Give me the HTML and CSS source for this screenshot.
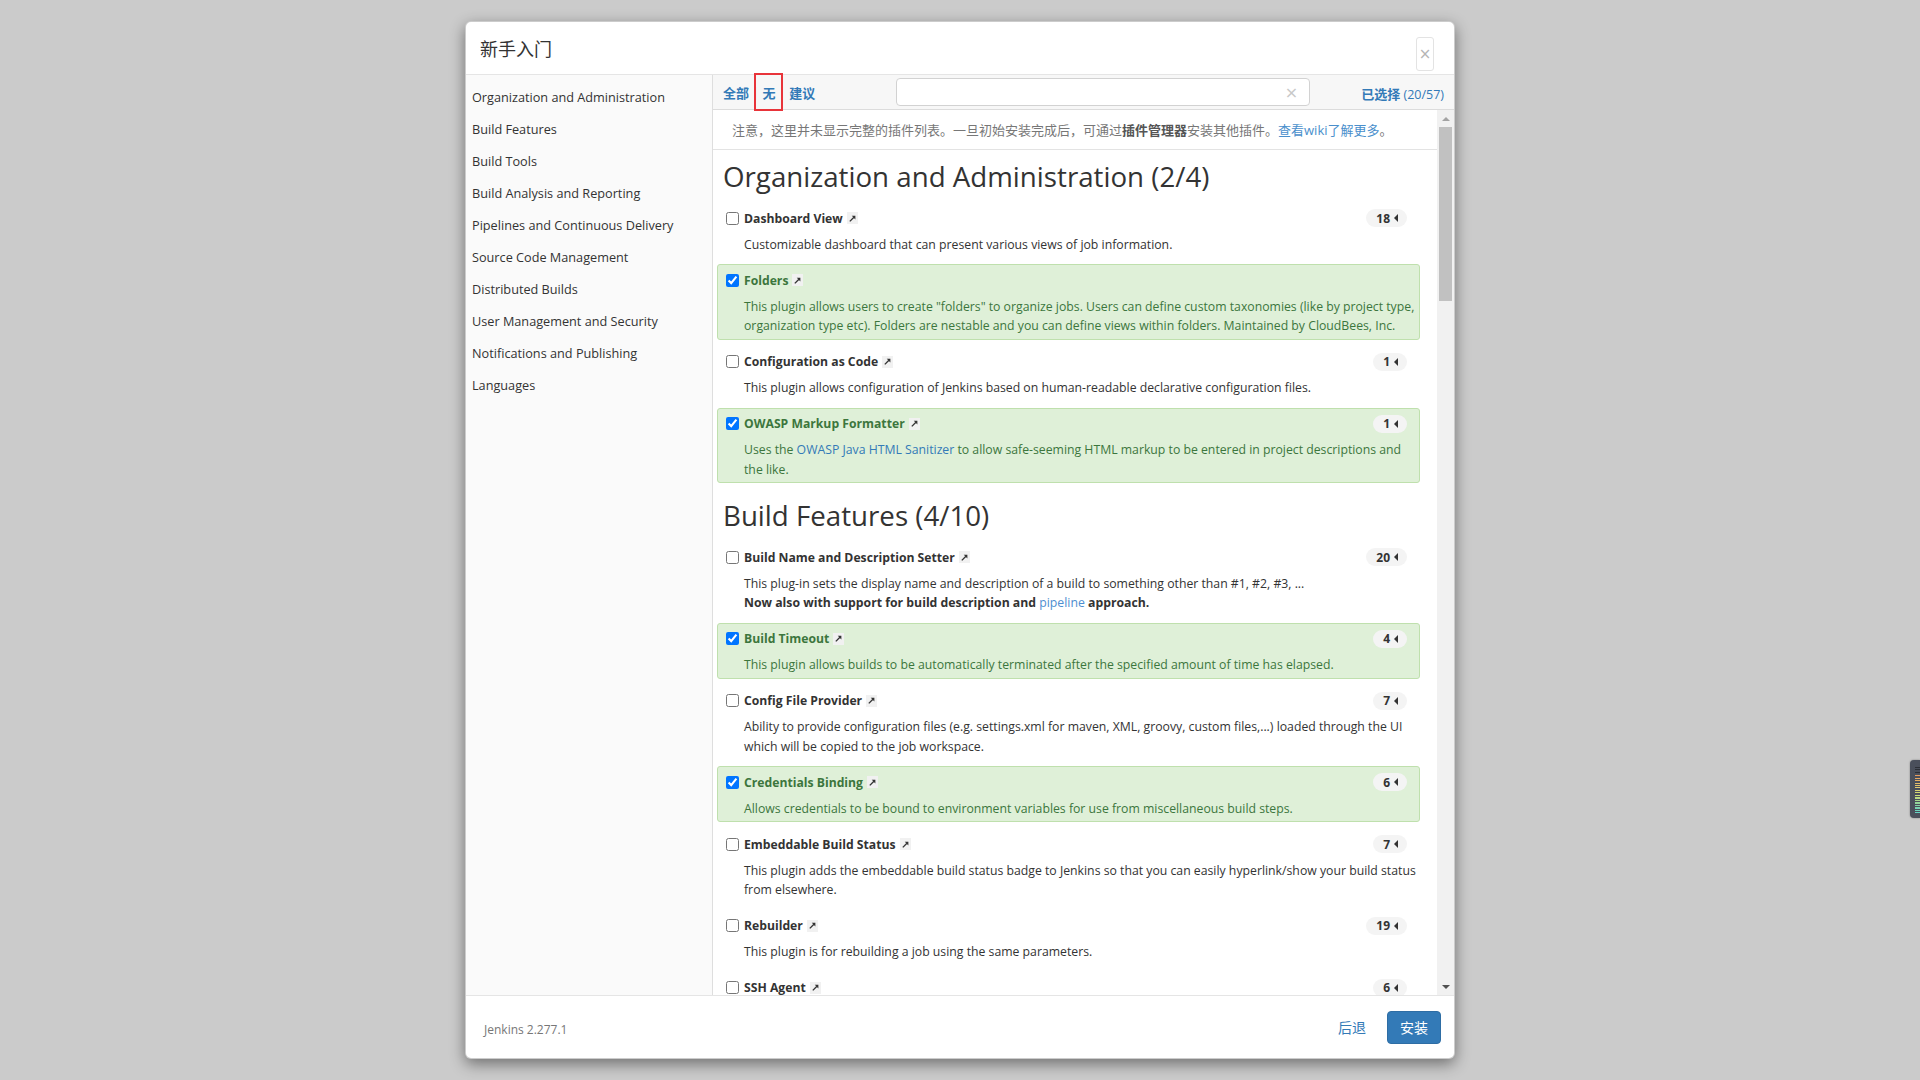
FILE: index.html
```html
<!DOCTYPE html>
<html lang="zh-CN">
<head>
<meta charset="utf-8">
<title>新手入门</title>
<link rel="stylesheet" href="styles.css">
</head>
<body>
<div class="dialog">
  <div class="header">
    <h1 class="title">新手入门</h1>
    <button class="close">×</button>
  </div>
  <div class="body">
    <nav class="sidebar">
      <a>Organization and Administration</a>
      <a>Build Features</a>
      <a>Build Tools</a>
      <a>Build Analysis and Reporting</a>
      <a>Pipelines and Continuous Delivery</a>
      <a>Source Code Management</a>
      <a>Distributed Builds</a>
      <a>User Management and Security</a>
      <a>Notifications and Publishing</a>
      <a>Languages</a>
    </nav>
    <div class="content">
      <div class="toolbar">
        <div class="filters"><a>全部</a><span class="sep">|</span><a class="marked">无</a><span class="sep">|</span><a>建议</a></div>
        <div class="search"><input type="text"><span class="clear">×</span></div>
        <div class="count"><b>已选择</b> (20/57)</div>
      </div>
      <div class="scroll">
        <div class="list">
          <div class="notice">注意，这里并未显示完整的插件列表。一旦初始安装完成后，可通过<b>插件管理器</b>安装其他插件。<a>查看wiki了解更多</a>。</div>
          <div class="plugins">
            <h2>Organization and Administration (2/4)</h2>

            <div class="plugin">
              <div class="ptitle"><input type="checkbox"><span>Dashboard View</span><span class="ext"><svg viewBox="0 0 10 10"><path d="M2 8.2 6.6 3.6" stroke="#333" stroke-width="1.5"/><path d="M4.2 2H8.2V6Z" fill="#333"/></svg></span></div>
              <span class="badge">18<i class="tri"></i></span>
              <div class="desc">Customizable dashboard that can present various views of job information.</div>
            </div>

            <div class="plugin sel">
              <div class="ptitle"><input type="checkbox" checked><span>Folders</span><span class="ext"><svg viewBox="0 0 10 10"><path d="M2 8.2 6.6 3.6" stroke="#333" stroke-width="1.5"/><path d="M4.2 2H8.2V6Z" fill="#333"/></svg></span></div>
              <div class="desc">This plugin allows users to create "folders" to organize jobs. Users can define custom taxonomies (like by project type, organization type etc). Folders are nestable and you can define views within folders. Maintained by CloudBees, Inc.</div>
            </div>

            <div class="plugin">
              <div class="ptitle"><input type="checkbox"><span>Configuration as Code</span><span class="ext"><svg viewBox="0 0 10 10"><path d="M2 8.2 6.6 3.6" stroke="#333" stroke-width="1.5"/><path d="M4.2 2H8.2V6Z" fill="#333"/></svg></span></div>
              <span class="badge">1<i class="tri"></i></span>
              <div class="desc">This plugin allows configuration of Jenkins based on human-readable declarative configuration files.</div>
            </div>

            <div class="plugin sel">
              <div class="ptitle"><input type="checkbox" checked><span>OWASP Markup Formatter</span><span class="ext"><svg viewBox="0 0 10 10"><path d="M2 8.2 6.6 3.6" stroke="#333" stroke-width="1.5"/><path d="M4.2 2H8.2V6Z" fill="#333"/></svg></span></div>
              <span class="badge">1<i class="tri"></i></span>
              <div class="desc">Uses the <a class="link">OWASP Java HTML Sanitizer</a> to allow safe-seeming HTML markup to be entered in project descriptions and the like.</div>
            </div>

            <h2>Build Features (4/10)</h2>

            <div class="plugin">
              <div class="ptitle"><input type="checkbox"><span>Build Name and Description Setter</span><span class="ext"><svg viewBox="0 0 10 10"><path d="M2 8.2 6.6 3.6" stroke="#333" stroke-width="1.5"/><path d="M4.2 2H8.2V6Z" fill="#333"/></svg></span></div>
              <span class="badge">20<i class="tri"></i></span>
              <div class="desc">This plug-in sets the display name and description of a build to something other than #1, #2, #3, ...<br><b>Now also with support for build description and <a class="link light">pipeline</a> approach.</b></div>
            </div>

            <div class="plugin sel">
              <div class="ptitle"><input type="checkbox" checked><span>Build Timeout</span><span class="ext"><svg viewBox="0 0 10 10"><path d="M2 8.2 6.6 3.6" stroke="#333" stroke-width="1.5"/><path d="M4.2 2H8.2V6Z" fill="#333"/></svg></span></div>
              <span class="badge">4<i class="tri"></i></span>
              <div class="desc">This plugin allows builds to be automatically terminated after the specified amount of time has elapsed.</div>
            </div>

            <div class="plugin">
              <div class="ptitle"><input type="checkbox"><span>Config File Provider</span><span class="ext"><svg viewBox="0 0 10 10"><path d="M2 8.2 6.6 3.6" stroke="#333" stroke-width="1.5"/><path d="M4.2 2H8.2V6Z" fill="#333"/></svg></span></div>
              <span class="badge">7<i class="tri"></i></span>
              <div class="desc">Ability to provide configuration files (e.g. settings.xml for maven, XML, groovy, custom files,...) loaded through the UI which will be copied to the job workspace.</div>
            </div>

            <div class="plugin sel">
              <div class="ptitle"><input type="checkbox" checked><span>Credentials Binding</span><span class="ext"><svg viewBox="0 0 10 10"><path d="M2 8.2 6.6 3.6" stroke="#333" stroke-width="1.5"/><path d="M4.2 2H8.2V6Z" fill="#333"/></svg></span></div>
              <span class="badge">6<i class="tri"></i></span>
              <div class="desc">Allows credentials to be bound to environment variables for use from miscellaneous build steps.</div>
            </div>

            <div class="plugin">
              <div class="ptitle"><input type="checkbox"><span>Embeddable Build Status</span><span class="ext"><svg viewBox="0 0 10 10"><path d="M2 8.2 6.6 3.6" stroke="#333" stroke-width="1.5"/><path d="M4.2 2H8.2V6Z" fill="#333"/></svg></span></div>
              <span class="badge">7<i class="tri"></i></span>
              <div class="desc">This plugin adds the embeddable build status badge to Jenkins so that you can easily hyperlink/show your build status from elsewhere.</div>
            </div>

            <div class="plugin">
              <div class="ptitle"><input type="checkbox"><span>Rebuilder</span><span class="ext"><svg viewBox="0 0 10 10"><path d="M2 8.2 6.6 3.6" stroke="#333" stroke-width="1.5"/><path d="M4.2 2H8.2V6Z" fill="#333"/></svg></span></div>
              <span class="badge">19<i class="tri"></i></span>
              <div class="desc">This plugin is for rebuilding a job using the same parameters.</div>
            </div>

            <div class="plugin">
              <div class="ptitle"><input type="checkbox"><span>SSH Agent</span><span class="ext"><svg viewBox="0 0 10 10"><path d="M2 8.2 6.6 3.6" stroke="#333" stroke-width="1.5"/><path d="M4.2 2H8.2V6Z" fill="#333"/></svg></span></div>
              <span class="badge">6<i class="tri"></i></span>
              <div class="desc">This plugin allows you to provide SSH credentials to builds via a ssh-agent in Jenkins.</div>
            </div>
          </div>
        </div>
        <div class="vscroll">
          <div class="arrow up"></div>
          <div class="thumb"></div>
          <div class="track"></div>
          <div class="arrow down"></div>
        </div>
      </div>
    </div>
  </div>
  <div class="footer">
    <span class="version">Jenkins 2.277.1</span>
    <a class="back">后退</a>
    <button class="install">安装</button>
  </div>
</div>
<div class="widget"><div class="bars-dark"></div><div class="bars"></div></div>
</body>
</html>
```
FILE: styles.css
```css
html, body {
  margin: 0;
  height: 1080px;
  overflow: hidden;
}
body {
  background: #cbcbcb;
  font-family: "Open Sans", "Noto Sans CJK SC", sans-serif;
  color: #333;
}
a { cursor: pointer; text-decoration: none; }

.dialog {
  width: 990px;
  height: 1038px;
  margin: 21px auto 0;
  background: #fff;
  border: 1px solid rgba(0, 0, 0, 0.2);
  border-radius: 6px;
  box-shadow: 0 5px 15px rgba(0, 0, 0, 0.45);
  box-sizing: border-box;
  display: flex;
  flex-direction: column;
  overflow: hidden;
}

.header {
  height: 53px;
  box-sizing: border-box;
  border-bottom: 1px solid #e5e5e5;
  display: flex;
  align-items: center;
  padding: 0 20px 0 14px;
  flex: none;
}
.title {
  margin: 0;
  font-family: "Noto Sans CJK SC", sans-serif;
  font-size: 18px;
  font-weight: normal;
  color: #333;
}
.close {
  margin: 12px 0 0 auto;
  width: 18px;
  height: 34px;
  padding: 0;
  border: 1px solid #e3e3e3;
  border-radius: 3px;
  background: #fff;
  color: #b5b5b5;
  font-family: "DejaVu Sans", sans-serif;
  font-size: 15px;
  line-height: 1;
}

.body {
  flex: 1;
  display: flex;
  min-height: 0;
}

.sidebar {
  width: 247px;
  flex: none;
  box-sizing: border-box;
  border-right: 1px solid #dedede;
  background: #fafafa;
  padding: 6px 0 0 6px;
}
.sidebar a {
  display: block;
  line-height: 32px;
  height: 32px;
  font-size: 12.7px;
  color: #333;
}

.content {
  flex: 1;
  display: flex;
  flex-direction: column;
  min-width: 0;
}

.toolbar {
  height: 35px;
  flex: none;
  box-sizing: border-box;
  border-bottom: 1px solid #dcdcdc;
  background: #f7f7f7;
  display: flex;
  align-items: center;
  padding: 2px 10px 0 10px;
}
.filters {
  display: flex;
  align-items: center;
  font-size: 13px;
  line-height: 18px;
}
.filters a {
  color: #337ab7;
  font-weight: bold;
}
.sep {
  color: #b8c4d0;
  margin: 0 4px 0 3px;
  font-size: 12px;
}
.marked { position: relative; }
.marked::after {
  content: "";
  position: absolute;
  left: -9px;
  right: -7px;
  top: -11px;
  bottom: -9px;
  border: 2px solid #e8343a;
}
.search {
  position: relative;
  margin-left: 81px;
  margin-top: -2px;
}
.search input {
  display: block;
  width: 414px;
  height: 28px;
  box-sizing: border-box;
  border: 1px solid #d2d2d2;
  border-radius: 4px;
  background: #fff;
  padding: 0 24px 0 8px;
  outline: none;
}
.clear {
  position: absolute;
  right: 12px;
  top: 5px;
  color: #c8c8c8;
  font-family: "DejaVu Sans", sans-serif;
  font-size: 16px;
  line-height: 20px;
}
.count {
  margin-left: auto;
  color: #337ab7;
  font-size: 12.5px;
}
.count b { font-size: 13px; }

.scroll {
  flex: 1;
  display: flex;
  min-height: 0;
}
.list {
  flex: 1;
  min-width: 0;
  overflow: hidden;
}
.notice {
  height: 40px;
  box-sizing: border-box;
  border-bottom: 1px solid #e3e3e3;
  padding: 10px 0 0 19px;
  font-size: 13px;
  line-height: 20px;
  color: #777;
  white-space: nowrap;
}
.notice b { color: #555; }
.notice a { color: #4a8fcc; }

.plugins {
  display: flex;
  flex-direction: column;
  padding: 0 17px 0 4px;
}
.plugins h2 {
  margin: 11px 0 10px 6px;
  font-size: 27.7px;
  line-height: 31px;
  font-weight: 500;
  color: #333;
  white-space: nowrap;
}

.plugin {
  position: relative;
  border: 1px solid transparent;
  border-radius: 3px;
  padding: 5px 0 3px 8px;
  margin-bottom: 6px;
  color: #333;
}
.plugin.sel {
  background: #dff0d8;
  border-color: #bfe0ad;
  color: #3c763d;
}
.ptitle {
  display: flex;
  align-items: center;
  height: 20px;
  font-size: 12.2px;
  font-weight: bold;
}
.ptitle input {
  margin: 0 5px 0 0;
  width: 13px;
  height: 13px;
  flex: none;
}
.ext {
  display: inline-flex;
  align-items: center;
  justify-content: center;
  margin-left: 4px;
  width: 11px;
  height: 12px;
  background: #f1f1f1;
}
.ext svg { width: 9px; height: 9px; display: block; }
.desc {
  margin: 6.5px 3px 0 18px;
  font-size: 12.25px;
  line-height: 19.5px;
}
.link { color: #337ab7; }
.link.light { color: #4e8ed0; font-weight: normal; }

.badge {
  position: absolute;
  top: 6px;
  right: 12px;
  height: 18px;
  box-sizing: border-box;
  border-radius: 9px;
  background: #f4f4f4;
  padding: 0 9px 0 10px;
  display: flex;
  align-items: center;
  gap: 4px;
  font-size: 12px;
  font-weight: bold;
  color: #333;
}
.tri {
  width: 0;
  height: 0;
  border-top: 4px solid transparent;
  border-bottom: 4px solid transparent;
  border-right: 4px solid #333;
}

.vscroll {
  width: 17px;
  flex: none;
  background: #f1f1f1;
  display: flex;
  flex-direction: column;
  align-items: center;
}
.arrow {
  height: 17px;
  width: 17px;
  flex: none;
  display: flex;
  align-items: center;
  justify-content: center;
}
.arrow::before {
  content: "";
  width: 0;
  height: 0;
  border-left: 4px solid transparent;
  border-right: 4px solid transparent;
}
.arrow.up::before { border-bottom: 4px solid #a3a3a3; }
.arrow.down::before { border-top: 4px solid #505050; }
.thumb {
  width: 13px;
  height: 174px;
  flex: none;
  background: #c1c1c1;
}
.track { flex: 1; }

.footer {
  height: 63px;
  flex: none;
  box-sizing: border-box;
  border-top: 1px solid #e5e5e5;
  display: flex;
  align-items: center;
  padding: 0 13px 0 18px;
}
.version {
  font-size: 12px;
  color: #777;
  margin-top: 4px;
}
.back {
  margin-left: auto;
  margin-right: 21px;
  font-size: 14px;
  color: #337ab7;
}
.install {
  width: 54px;
  height: 33px;
  padding: 0;
  border: 1px solid #2e6da4;
  border-radius: 4px;
  background: #337ab7;
  color: #fff;
  font-family: "Noto Sans CJK SC", sans-serif;
  font-size: 14px;
}

.widget {
  position: fixed;
  right: 0;
  top: 760px;
  width: 10px;
  height: 58px;
  background: #4a4f5b;
  border-radius: 4px 0 0 4px;
  box-shadow: 0 0 2px rgba(0, 0, 0, 0.4);
  display: flex;
  flex-direction: column;
  align-items: flex-end;
  padding-top: 7px;
  box-sizing: border-box;
}
.bars-dark {
  width: 5px;
  height: 7px;
  background: repeating-linear-gradient(#2c2f36 0 1px, transparent 1px 2.5px);
}
.bars {
  width: 5px;
  height: 38px;
  margin-top: 1px;
  background:
    repeating-linear-gradient(transparent 0 1px, #4a4f5b 1px 2.5px),
    linear-gradient(#e99a5c, #e3c86c 30%, #c9dc78 55%, #8fd49a 75%, #62d3c6);
}
```
